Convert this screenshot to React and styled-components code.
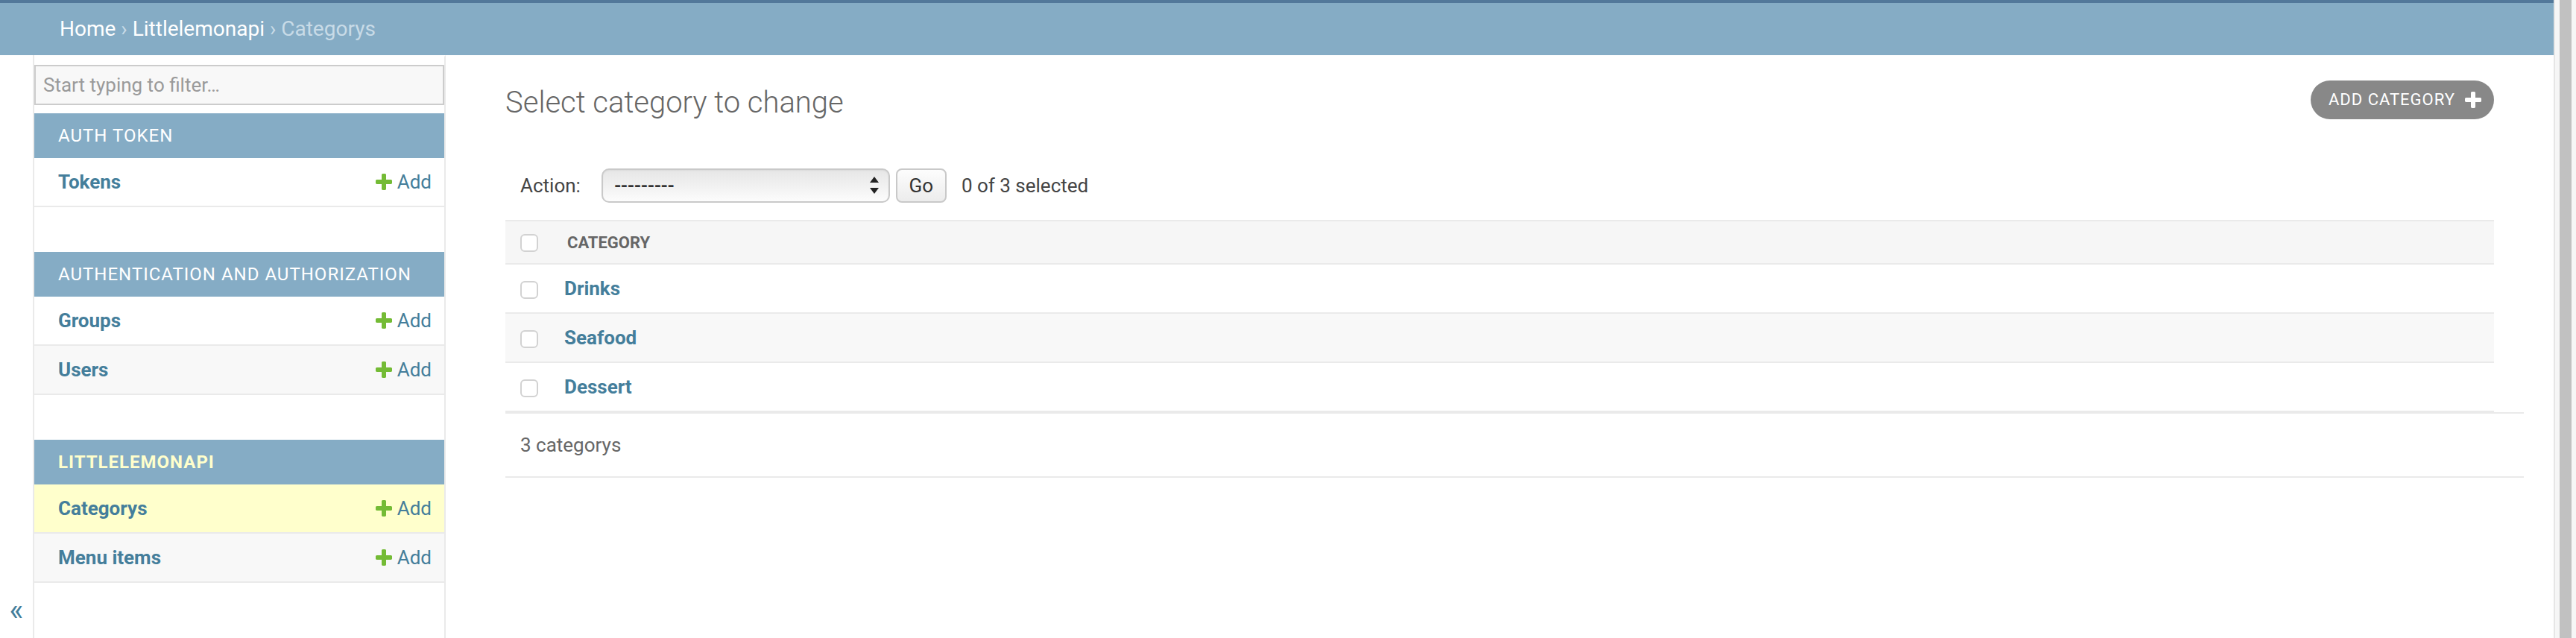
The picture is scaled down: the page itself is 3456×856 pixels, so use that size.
import React from "react";
import styled, { createGlobalStyle } from "styled-components";

const LINK = "#447e9b";
const PRIMARY = "#85acc5";
const HAIRLINE = "#eaeaea";

const GlobalStyle = createGlobalStyle`
  html, body { margin: 0; padding: 0; }
  body {
    font-family: Roboto, "Liberation Sans", Arial, sans-serif;
    color: #333;
    background: #fff;
  }
  #root { height: 856px; }
`;

const Page = styled.div`
  display: flex;
  height: 856px;
  overflow: hidden;
`;

const Viewport = styled.div`
  flex: 1;
  min-width: 0;
  display: flex;
  flex-direction: column;
`;

const Breadcrumbs = styled.div`
  border-top: 4px solid #52789a;
  background: ${PRIMARY};
  padding: 18px 80px 19px;
  font-size: 28px;
  line-height: 33px;
  color: #c8dbe7;
  white-space: nowrap;
`;

const Crumb = styled.a`
  color: #fff;
  text-decoration: none;
`;

const Main = styled.div`
  display: flex;
  flex: 1;
  min-height: 0;
`;

const Toggle = styled.div`
  flex: 0 0 46px;
  box-sizing: border-box;
  border-right: 2px solid ${HAIRLINE};
  display: flex;
  justify-content: center;
  align-items: flex-start;
  padding-top: 721px;
  font-size: 40px;
  line-height: 47px;
  color: ${LINK};
`;

const Sidebar = styled.nav`
  flex: 0 0 552px;
  box-sizing: border-box;
  border-right: 2px solid ${HAIRLINE};
  border-top: 2px solid transparent;
`;

const Filter = styled.div`
  box-sizing: border-box;
  height: 54px;
  margin: 11px 0;
  border: 2px solid #ccc;
  background: #f8f8f8;
  padding: 0 10px;
  display: flex;
  align-items: center;
  font-size: 26px;
  color: #9a9a9a;
`;

const Module = styled.section`
  margin-bottom: 60px;
`;

const Caption = styled.div`
  height: 60px;
  line-height: 60px;
  padding: 0 32px;
  background: ${PRIMARY};
  color: ${(p) => (p.$current ? "#ffffcc" : "#fff")};
  font-weight: ${(p) => (p.$current ? 700 : 400)};
  font-size: 24px;
  letter-spacing: 1px;
  text-transform: uppercase;
  white-space: nowrap;
`;

const NavRow = styled.div`
  display: flex;
  align-items: flex-start;
  padding: 16px 17px 16px 32px;
  border-bottom: 2px solid ${HAIRLINE};
  background: ${(p) => (p.$current ? "#ffffcc" : p.$alt ? "#f8f8f8" : "#fff")};
  font-size: 26px;
  line-height: 32px;
`;

const NavName = styled.a`
  flex: 1;
  color: ${LINK};
  font-weight: 700;
  text-decoration: none;
`;

const AddLink = styled.a`
  display: inline-flex;
  align-items: flex-start;
  color: ${LINK};
  text-decoration: none;
  white-space: nowrap;
`;

const AddIcon = styled.svg`
  width: 28px;
  height: 28px;
  margin-top: 2px;
  margin-right: 4px;
  flex: 0 0 28px;
`;

const PLUS =
  "M1600 796v192q0 40-28 68t-68 28h-416v416q0 40-28 68t-68 28h-192q-40 0-68-28t-28-68v-416h-416q-40 0-68-28t-28-68v-192q0-40 28-68t68-28h416v-416q0-40 28-68t68-28h192q40 0 68 28t28 68v416h416q40 0 68 28t28 68z";

const Plus = ({ color = "#74bb35", as: Comp = AddIcon }) => (
  <Comp viewBox="0 0 1792 1792">
    <path d={PLUS} fill={color} />
  </Comp>
);

const Content = styled.div`
  flex: 1;
  min-width: 0;
  padding: 40px 80px;
`;

const TitleRow = styled.div`
  display: flex;
  justify-content: space-between;
  align-items: flex-start;
  margin-bottom: 40px;
`;

const Title = styled.h1`
  margin: 0;
  font-size: 40px;
  line-height: 47px;
  font-weight: 300;
  color: #666;
`;

const ToolButton = styled.a`
  position: relative;
  margin-top: -6px;
  height: 52px;
  line-height: 52px;
  padding: 0 52px 0 24px;
  border-radius: 30px;
  background: #888;
  color: #fff;
  font-size: 22px;
  letter-spacing: 1px;
  text-transform: uppercase;
  text-decoration: none;
  white-space: nowrap;
`;

const ToolPlus = styled.svg`
  position: absolute;
  right: 14px;
  top: 12px;
  width: 28px;
  height: 28px;
`;

const Actions = styled.div`
  display: flex;
  align-items: center;
  padding: 25px 20px 23px;
  font-size: 26px;
  color: #444;
`;

const SelectBox = styled.div`
  box-sizing: border-box;
  margin-left: 28px;
  width: 387px;
  height: 46px;
  border: 2px solid #c9c9c9;
  border-radius: 10px;
  background: linear-gradient(#e6e6e6, #fcfcfc);
  box-shadow: inset 0 1px 2px rgba(0, 0, 0, 0.06);
  display: flex;
  align-items: center;
  justify-content: space-between;
  padding: 0 12px 0 15px;
  font-size: 24px;
  font-weight: 700;
  color: #333;
  letter-spacing: -0.5px;
`;

const Arrows = styled.svg`
  width: 14px;
  height: 24px;
`;

const GoButton = styled.button`
  box-sizing: border-box;
  margin-left: 8px;
  width: 68px;
  height: 46px;
  border: 2px solid #c9c9c9;
  border-radius: 8px;
  background: linear-gradient(#fdfdfd, #ececec);
  font-family: inherit;
  font-size: 26px;
  color: #333;
  padding: 0;
`;

const Counter = styled.span`
  margin-left: 20px;
`;

const Table = styled.table`
  width: 100%;
  border-collapse: collapse;
`;

const HeadCell = styled.th`
  height: 56px;
  padding: ${(p) => (p.$check ? "0" : "0 20px")};
  width: ${(p) => (p.$check ? "63px" : "auto")};
  text-align: ${(p) => (p.$check ? "center" : "left")};
  vertical-align: middle;
  background: #f6f6f6;
  border-top: 2px solid ${HAIRLINE};
  border-bottom: 2px solid ${HAIRLINE};
  font-size: 22px;
  font-weight: 700;
  color: #666;
  text-transform: uppercase;
`;

const BodyRow = styled.tr`
  background: ${(p) => (p.$alt ? "#f8f8f8" : "#fff")};
`;

const BodyCell = styled.td`
  height: 32px;
  padding: ${(p) => (p.$check ? "0" : "16px")};
  text-align: ${(p) => (p.$check ? "center" : "left")};
  vertical-align: middle;
  border-bottom: 2px solid ${HAIRLINE};
  font-size: 26px;
  line-height: 32px;
`;

const RowLink = styled.a`
  color: ${LINK};
  font-weight: 700;
  text-decoration: none;
`;

const Check = styled.span`
  display: inline-block;
  box-sizing: border-box;
  width: 24px;
  height: 24px;
  vertical-align: middle;
  border: 2px solid #d2d2d2;
  border-radius: 6px;
  background: #fff;
`;

const Paginator = styled.p`
  margin: 0;
  width: 100%;
  padding: 20px;
  line-height: 44px;
  font-size: 26px;
  color: #666;
  border-top: 2px solid ${HAIRLINE};
  border-bottom: 2px solid ${HAIRLINE};
`;

const ScrollTrack = styled.div`
  flex: 0 0 30px;
  box-sizing: border-box;
  border-left: 2px solid #e6e6e6;
  background: #f6f6f6;
  padding: 0 6px;
  display: flex;
`;

const ScrollThumb = styled.div`
  flex: 1;
  background: #c1c1c1;
`;

const modules = [
  { name: "Auth Token", models: ["Tokens"] },
  { name: "Authentication and Authorization", models: ["Groups", "Users"] },
  { name: "Littlelemonapi", current: true, models: ["Categorys", "Menu items"] },
];

const categories = ["Drinks", "Seafood", "Dessert"];

export default function App() {
  return (
    <>
      <GlobalStyle />
      <Page>
        <Viewport>
          <Breadcrumbs>
            <Crumb href="#">Home</Crumb> › <Crumb href="#">Littlelemonapi</Crumb> › Categorys
          </Breadcrumbs>
          <Main>
            <Toggle>«</Toggle>
            <Sidebar>
              <Filter>Start typing to filter…</Filter>
              {modules.map((m) => (
                <Module key={m.name}>
                  <Caption $current={m.current}>{m.name}</Caption>
                  {m.models.map((model, i) => (
                    <NavRow
                      key={model}
                      $alt={i % 2 === 1}
                      $current={model === "Categorys"}
                    >
                      <NavName href="#">{model}</NavName>
                      <AddLink href="#">
                        <Plus />
                        Add
                      </AddLink>
                    </NavRow>
                  ))}
                </Module>
              ))}
            </Sidebar>
            <Content>
              <TitleRow>
                <Title>Select category to change</Title>
                <ToolButton href="#">
                  Add category
                  <Plus color="#fff" as={ToolPlus} />
                </ToolButton>
              </TitleRow>
              <Actions>
                <span>Action:</span>
                <SelectBox>
                  <span>---------</span>
                  <Arrows viewBox="0 0 14 24">
                    <path d="M7 0 L13 8 L1 8 Z" fill="#222" />
                    <path d="M1 15 L13 15 L7 23 Z" fill="#222" />
                  </Arrows>
                </SelectBox>
                <GoButton>Go</GoButton>
                <Counter>0 of 3 selected</Counter>
              </Actions>
              <Table>
                <thead>
                  <tr>
                    <HeadCell $check>
                      <Check />
                    </HeadCell>
                    <HeadCell>Category</HeadCell>
                  </tr>
                </thead>
                <tbody>
                  {categories.map((c, i) => (
                    <BodyRow key={c} $alt={i % 2 === 1}>
                      <BodyCell $check>
                        <Check />
                      </BodyCell>
                      <BodyCell>
                        <RowLink href="#">{c}</RowLink>
                      </BodyCell>
                    </BodyRow>
                  ))}
                </tbody>
              </Table>
              <Paginator>3 categorys</Paginator>
            </Content>
          </Main>
        </Viewport>
        <ScrollTrack>
          <ScrollThumb />
        </ScrollTrack>
      </Page>
    </>
  );
}
